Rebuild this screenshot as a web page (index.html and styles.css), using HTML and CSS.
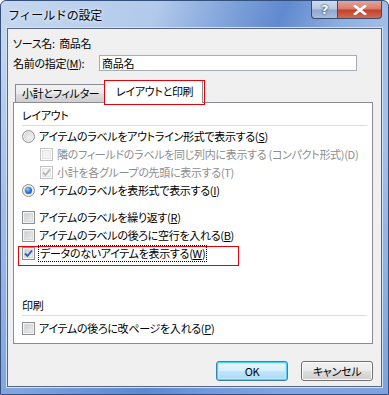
FILE: index.html
```html
<!DOCTYPE html>
<html>
<head>
    <link rel="stylesheet" href="styles.css">
</head>
<body>
    <div class="window">
        <div class="titlebar">
            <span class="title">フィールドの設定</span>
            <div class="caption-buttons">
                <div class="cap-btn help">?</div>
                <div class="cap-btn close">
                    <svg width="14" height="10" viewBox="0 0 14 10">
                        <path d="M2 1 L12 9 M12 1 L2 9" stroke="#fff" stroke-width="2.6" stroke-linecap="square"/>
                    </svg>
                </div>
            </div>
        </div>
        <div class="client">
            <div class="source-row">ソース名:&nbsp; 商品名</div>
            <div class="name-row">
                <span class="name-label">名前の指定(<u>M</u>):</span>
                <div class="textbox">商品名</div>
            </div>
            <div class="tabs">
                <div class="tab">小計とフィルター</div>
                <div class="tab active marked">レイアウトと印刷</div>
            </div>
            <div class="panel">
                <div class="group-title">レイアウト</div>
                <div class="sep"></div>
                <div class="opt">
                    <span class="radio"></span>
                    <span>アイテムのラベルをアウトライン形式で表示する(<u>S</u>)</span>
                </div>
                <div class="opt indent disabled">
                    <span class="check"></span>
                    <span>隣のフィールドのラベルを同じ列内に表示する (コンパクト形式)(D)</span>
                </div>
                <div class="opt indent disabled">
                    <span class="check on">
                        <svg width="11" height="11" viewBox="0 0 11 11"><path d="M2 5.5 L4.5 8 L9 2.5" fill="none" stroke="#b4b4b4" stroke-width="1.8"/></svg>
                    </span>
                    <span>小計を各グループの先頭に表示する(T)</span>
                </div>
                <div class="opt">
                    <span class="radio on"></span>
                    <span>アイテムのラベルを表形式で表示する(<u>I</u>)</span>
                </div>
                <div class="opt gap-top">
                    <span class="check"></span>
                    <span>アイテムのラベルを繰り返す(<u>R</u>)</span>
                </div>
                <div class="opt">
                    <span class="check"></span>
                    <span>アイテムのラベルの後ろに空行を入れる(<u>B</u>)</span>
                </div>
                <div class="opt marked-row">
                    <span class="check on">
                        <svg width="11" height="11" viewBox="0 0 11 11"><path d="M2 5.5 L4.5 8 L9 2.5" fill="none" stroke="#2f57b5" stroke-width="1.8"/></svg>
                    </span>
                    <span class="focus">データのないアイテムを表示する(<u>W</u>)</span>
                </div>
                <div class="group-title print">印刷</div>
                <div class="sep"></div>
                <div class="opt after-sep">
                    <span class="check"></span>
                    <span>アイテムの後ろに改ページを入れる(<u>P</u>)</span>
                </div>
            </div>
            <div class="buttons">
                <div class="btn default">OK</div>
                <div class="btn">キャンセル</div>
            </div>
        </div>
    </div>
</body>
</html>
```

FILE: styles.css
```css
* {
    box-sizing: border-box;
}

body {
    margin: 0;
    font-family: "Noto Sans CJK JP", "Noto Sans", sans-serif;
    font-size: 11px;
    letter-spacing: -0.3px;
    font-feature-settings: "palt";
    color: #000;
    background: #fff;
}

u {
    text-decoration: underline;
    text-underline-offset: 1px;
}

.window {
    width: 389px;
    height: 395px;
    display: flex;
    flex-direction: column;
    border: 1px solid #34507c;
    border-radius: 6px 6px 0 0;
    overflow: hidden;
    background:
        linear-gradient(to bottom, rgba(0, 0, 0, 0) 40px, rgba(90, 135, 215, 0.55) 100%),
        linear-gradient(110deg, #c6d8ef 0%, #b1c9eb 30%, #7ea2da 44%, #6089cf 54%, #90b0e2 66%, #b4cbec 82%, #a9c2ea 100%);
}

/* title bar */
.titlebar {
    height: 27px;
    display: flex;
    align-items: flex-start;
    flex-shrink: 0;
}

.title {
    font-size: 12px;
    line-height: 14px;
    margin: 7px 0 0 7px;
    letter-spacing: -0.2px;
    font-feature-settings: normal;
    text-shadow: 0 0 5px #e8f0fb, 0 0 3px #e8f0fb;
}

.caption-buttons {
    display: flex;
    margin-left: auto;
    margin-right: 6px;
}

.cap-btn {
    height: 18px;
    border: 1px solid #3c4c66;
    border-top: none;
    display: flex;
    align-items: center;
    justify-content: center;
}

.help {
    width: 26px;
    border-radius: 0 0 0 4px;
    border-right: none;
    color: #fff;
    font-family: "DejaVu Sans", sans-serif;
    font-weight: bold;
    font-size: 13px;
    text-shadow: 0 0 1px #253850, 0 0 2px #253850;
    background: linear-gradient(to bottom, #d1dcec 0%, #b6c6de 48%, #8ea7cc 52%, #a6bde0 100%);
}

.close {
    width: 45px;
    border-radius: 0 0 4px 0;
    background: linear-gradient(to bottom, #e7a597 0%, #d67a69 48%, #c0402c 52%, #d46a52 100%);
}

/* client area */
.client {
    flex: 1;
    margin: 0 6px 7px 6px;
    background: #f0f0f0;
    border: 1px solid #59657a;
    box-shadow: 0 0 0 1px #d3e1f5;
    display: flex;
    flex-direction: column;
}

.source-row {
    margin: 6px 0 0 5px;
    height: 16px;
    line-height: 16px;
}

.name-row {
    display: flex;
    align-items: center;
    margin: 4px 0 0 5px;
    height: 16px;
}

.name-label {
    width: 86px;
}

.textbox {
    width: 258px;
    height: 16px;
    line-height: 14px;
    padding-left: 2px;
    background: #fff;
    border: 1px solid #a5acb5;
    border-top-color: #abadb3;
}

/* tabs */
.tabs {
    display: flex;
    align-items: flex-end;
    margin: 9px 0 0 7px;
    height: 22px;
    position: relative;
    z-index: 1;
}

.tab {
    height: 18px;
    width: 90px;
    line-height: 16px;
    padding-left: 6px;
    border: 1px solid #898c95;
    border-bottom: none;
    background: linear-gradient(to bottom, #f2f2f2 0%, #ebebeb 50%, #dddddd 51%, #cfcfcf 100%);
    color: #000;
    white-space: nowrap;
}

.tab.active {
    height: 23px;
    width: 99px;
    margin-left: -1px;
    margin-bottom: -1px;
    padding-left: 11px;
    line-height: 20px;
    background: #fff;
    border-color: #898c95;
}

.marked {
    position: relative;
}

.marked::after {
    content: "";
    position: absolute;
    left: -1px;
    top: -1px;
    right: -3px;
    bottom: -2px;
    border: 1px solid #e6000a;
}

.panel {
    margin: 0 8px 0 5px;
    height: 242px;
    background: #fff;
    border: 1px solid #898c95;
    padding: 3px 5px 0 8px;
}

.group-title {
    height: 18px;
    line-height: 18px;
}

.group-title.print {
    margin-top: 34px;
}

.sep {
    height: 1px;
    background: #d5dde5;
    margin-top: 1px;
}

.opt {
    display: flex;
    align-items: center;
    gap: 4px;
    height: 18px;
    white-space: nowrap;
}

.sep + .opt {
    margin-top: 1px;
}

.opt.after-sep {
    margin-top: 3px;
}

.opt.indent {
    padding-left: 18px;
}

.opt.gap-top {
    margin-top: 9px;
}

.opt.disabled {
    color: #8d8d8d;
}

/* checkbox */
.check {
    width: 13px;
    height: 13px;
    flex-shrink: 0;
    border: 1px solid #8e8f8f;
    background: linear-gradient(135deg, #c2c6cc 0%, #e2e3e5 60%, #f4f4f4 100%);
    box-shadow: inset 0 0 0 1px #f4f4f4, inset 0 0 0 2px #dadbdd;
    display: flex;
    align-items: center;
    justify-content: center;
}

.disabled .check {
    border-color: #c3c3c3;
    background: #f3f3f3;
    box-shadow: inset 0 0 0 1px #fff, inset 0 0 0 2px #e4e4e4;
}

/* radio */
.radio {
    width: 13px;
    height: 13px;
    flex-shrink: 0;
    border-radius: 50%;
    border: 1px solid #8e8f8f;
    background: radial-gradient(circle at 60% 60%, #f4f4f4 0%, #dcdcdc 55%, #c0c3c8 100%);
    box-shadow: inset 0 0 0 1px #f4f4f4;
    position: relative;
}

.radio.on::after {
    content: "";
    position: absolute;
    left: 2px;
    top: 2px;
    width: 7px;
    height: 7px;
    border-radius: 50%;
    background: radial-gradient(circle at 40% 35%, #9fd6ff 0%, #2f7ad8 45%, #14408f 100%);
}

.focus {
    outline: 1px dotted #000;
    outline-offset: 0;
    padding: 0 1px;
    line-height: 15px;
}

.marked-row {
    position: relative;
}

.marked-row::after {
    content: "";
    position: absolute;
    left: -4px;
    top: 2px;
    width: 219px;
    height: 18px;
    border: 1px solid #e6000a;
}

/* bottom buttons */
.buttons {
    display: flex;
    justify-content: flex-end;
    gap: 13px;
    margin: 17px 8px 0 0;
}

.btn {
    width: 72px;
    height: 20px;
    line-height: 18px;
    text-align: center;
    border: 1px solid #707070;
    border-radius: 3px;
    background: linear-gradient(to bottom, #f2f2f2 0%, #ebebeb 48%, #dddddd 52%, #cfcfcf 100%);
    box-shadow: inset 0 0 0 1px #fcfcfc;
}

.btn.default {
    border-color: #3c7fb1;
    box-shadow: inset 0 0 0 1px #48d4f5, inset 0 0 0 2px #bfeaf7;
    background: linear-gradient(to bottom, #eaf6fd 0%, #d9f0fc 48%, #bee6fd 52%, #a7d9f5 100%);
}
```
